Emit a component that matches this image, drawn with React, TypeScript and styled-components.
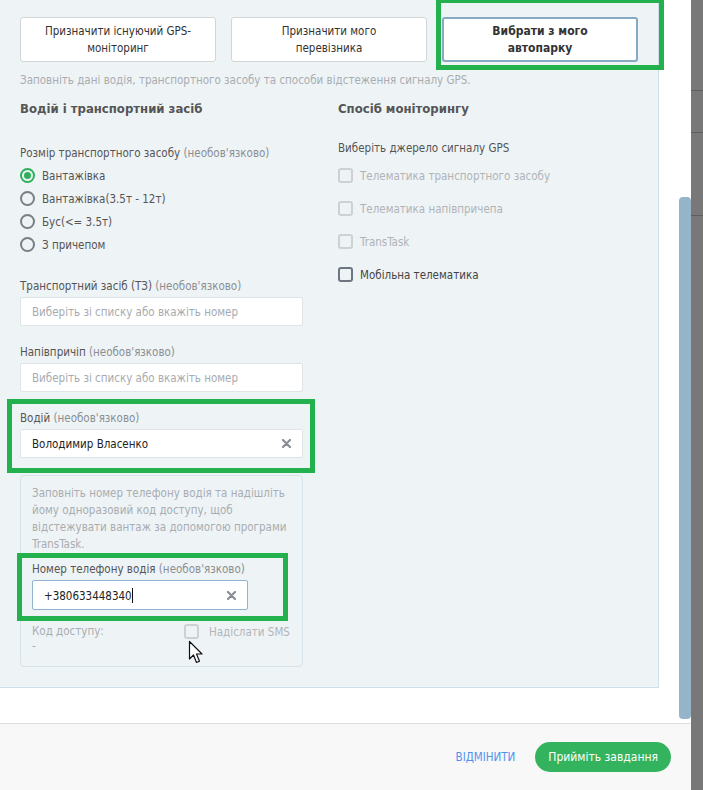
import React from "react"
import styled, { createGlobalStyle, css } from "styled-components"

const GlobalStyle = createGlobalStyle`
  html, body {
    margin: 0;
    padding: 0;
    background: #ffffff;
  }
  body {
    font-family: "DejaVu Sans Condensed", "Liberation Sans Narrow", Roboto, sans-serif;
    font-size: 11.5px;
    color: #555;
  }
`

const Screen = styled.div`
  display: flex;
  width: 703px;
  height: 790px;
  overflow: hidden;
`

const Modal = styled.div`
  display: flex;
  flex-direction: column;
  width: 691px;
  height: 790px;
  background: #fff;
`

const Backdrop = styled.div`
  flex: 1;
  background: #787878;
  display: flex;
  flex-direction: column;
`

const BackdropLine = styled.div<{ $top: number }>`
  margin-top: ${(p) => p.$top}px;
  height: 1px;
  background: #5e5e5e;
`

const Body = styled.div`
  display: flex;
  height: 723px;
`

const Panel = styled.div`
  position: relative;
  box-sizing: border-box;
  width: 659px;
  height: 688px;
  padding: 17px 0 0 20px;
  background: #eef3f6;
  border-right: 1px solid #cfdfe8;
  border-bottom: 1px solid #cfdfe8;
`

const Scrollbar = styled.div`
  width: 12px;
  height: 522px;
  margin: 197px 0 0 20px;
  border-radius: 4px;
  background: #95b4ca;
`

const TabRow = styled.div`
  display: flex;
  gap: 15px;
`

const Tab = styled.button<{ $active?: boolean }>`
  box-sizing: border-box;
  width: 196px;
  height: 45px;
  padding: 0 16px;
  background: #fff;
  border: 1px solid #d3d6d9;
  border-radius: 3px;
  font-family: inherit;
  font-size: 11.5px;
  line-height: 17px;
  color: #333;
  ${(p) =>
    p.$active &&
    css`
      border: 2px solid #86a9c4;
      font-weight: bold;
      font-size: 12px;
    `}
`

const Highlight = styled.div<{ $l: number; $t: number; $w: number; $h: number }>`
  position: absolute;
  left: ${(p) => p.$l}px;
  top: ${(p) => p.$t}px;
  width: ${(p) => p.$w}px;
  height: ${(p) => p.$h}px;
  box-sizing: border-box;
  border: 5px solid #22b14c;
  pointer-events: none;
`

const Hint = styled.div`
  margin-top: 10px;
  line-height: 16px;
  color: #a9adb1;
`

const Columns = styled.div`
  display: grid;
  grid-template-columns: 283px 283px;
  column-gap: 35px;
  margin-top: 13px;
`

const Column = styled.div`
  display: flex;
  flex-direction: column;
`

const SectionTitle = styled.div`
  font-size: 13px;
  font-weight: bold;
  line-height: 16px;
  color: #555;
`

const Label = styled.div<{ $mt?: number; $ellipsis?: boolean }>`
  margin-top: ${(p) => p.$mt ?? 18}px;
  margin-bottom: 3px;
  line-height: 16px;
  color: #555;
  ${(p) =>
    p.$ellipsis &&
    css`
      white-space: nowrap;
      overflow: hidden;
      text-overflow: ellipsis;
    `}
`

const Optional = styled.span`
  color: #8b8f93;
`

const RadioList = styled.div`
  display: flex;
  flex-direction: column;
`

const RadioRow = styled.div`
  display: flex;
  align-items: center;
  gap: 7px;
  height: 23px;
  color: #555;
`

const RadioDot = styled.span<{ $checked?: boolean }>`
  box-sizing: border-box;
  width: 15px;
  height: 15px;
  border-radius: 50%;
  border: 2px solid ${(p) => (p.$checked ? "#2eb05b" : "#7a7f84")};
  display: flex;
  align-items: center;
  justify-content: center;
  &::after {
    content: "";
    width: 7px;
    height: 7px;
    border-radius: 50%;
    background: ${(p) => (p.$checked ? "#2eb05b" : "transparent")};
  }
`

const InputBox = styled.div<{ $focused?: boolean; $width?: number; $height?: number }>`
  box-sizing: border-box;
  display: flex;
  align-items: center;
  width: ${(p) => p.$width ?? 283}px;
  height: ${(p) => p.$height ?? 29}px;
  padding: 0 11px;
  background: #fff;
  border: 1px solid ${(p) => (p.$focused ? "#8fb2d2" : "#dfe4e8")};
  border-radius: 2px;
`

const InputText = styled.span<{ $placeholder?: boolean }>`
  flex: 1;
  color: ${(p) => (p.$placeholder ? "#a7abaf" : "#222")};
`

const Caret = styled.span`
  display: inline-block;
  width: 1px;
  height: 15px;
  background: #111;
  vertical-align: -3px;
`

const DriverGroup = styled.div`
  position: relative;
  display: flex;
  flex-direction: column;
`

const PhoneCard = styled.div`
  position: relative;
  box-sizing: border-box;
  width: 283px;
  height: 192px;
  margin-top: 17px;
  padding: 9px 11px 0;
  border: 1px solid #d6e3ea;
  border-radius: 4px;
`

const CardText = styled.div`
  line-height: 17px;
  color: #a9adb1;
`

const PhoneField = styled.div`
  width: 216px;
`

const AccessRow = styled.div`
  display: flex;
  margin-top: 14px;
  white-space: nowrap;
`

const AccessInfo = styled.div`
  width: 152px;
  line-height: 15px;
  color: #a9adb1;
`

const SmsRow = styled.div`
  display: flex;
  align-items: center;
  gap: 10px;
  height: 15px;
  color: #b3b6b9;
`

const Check = styled.span<{ $enabled?: boolean }>`
  box-sizing: border-box;
  flex: none;
  width: 15px;
  height: 15px;
  border-radius: 3px;
  border: 2px solid ${(p) => (p.$enabled ? "#6c7580" : "#cdd1d5")};
`

const CheckList = styled.div`
  display: flex;
  flex-direction: column;
`

const CheckRow = styled.div<{ $enabled?: boolean }>`
  display: flex;
  align-items: center;
  gap: 7px;
  height: 33px;
  color: ${(p) => (p.$enabled ? "#444" : "#b0b4b8")};
`

const Cursor = styled.svg`
  position: absolute;
  left: 167px;
  top: 164px;
`

const Footer = styled.div`
  flex: 1;
  display: flex;
  align-items: center;
  justify-content: flex-end;
  gap: 20px;
  padding-right: 20px;
  background: #f8f8f8;
  border-top: 1px solid #dedede;
`

const CancelButton = styled.button`
  border: none;
  background: none;
  padding: 0;
  font-family: inherit;
  font-size: 11.5px;
  color: #4f93f0;
  text-transform: uppercase;
`

const AcceptButton = styled.button`
  height: 30px;
  padding: 0 13px;
  border: none;
  border-radius: 15px;
  background: #33b35e;
  color: #fff;
  font-family: inherit;
  font-size: 12px;
`

const ClearIcon = () => (
  <svg width="9" height="9" viewBox="0 0 9 9">
    <path d="M1 1 L8 8 M8 1 L1 8" stroke="#8a8e92" strokeWidth="2.2" strokeLinecap="round" />
  </svg>
)

const Field: React.FC<{ label: string; value?: string; placeholder?: string; mt?: number }> = ({
  label,
  value,
  placeholder,
  mt,
}) => (
  <>
    <Label $mt={mt}>
      {label} <Optional>(необов'язково)</Optional>
    </Label>
    <InputBox>
      <InputText $placeholder={!value}>{value ?? placeholder}</InputText>
      {value && <ClearIcon />}
    </InputBox>
  </>
)

const sizes = ["Вантажівка", "Вантажівка(3.5т - 12т)", "Бус(<= 3.5т)", "З причепом"]

const sources = [
  { name: "Телематика транспортного засобу", enabled: false },
  { name: "Телематика напівпричепа", enabled: false },
  { name: "TransTask", enabled: false },
  { name: "Мобільна телематика", enabled: true },
]

export default function App() {
  return (
    <Screen>
      <GlobalStyle />
      <Modal>
        <Body>
          <Panel>
            <TabRow>
              <Tab>Призначити існуючий GPS-моніторинг</Tab>
              <Tab>Призначити мого перевізника</Tab>
              <Tab $active>Вибрати з мого автопарку</Tab>
            </TabRow>
            <Highlight $l={436} $t={-2} $w={228} $h={72} />
            <Hint>Заповніть дані водія, транспортного засобу та способи відстеження сигналу GPS.</Hint>
            <Columns>
              <Column>
                <SectionTitle>Водій і транспортний засіб</SectionTitle>
                <Label $mt={28}>
                  Розмір транспортного засобу <Optional>(необов'язково)</Optional>
                </Label>
                <RadioList>
                  {sizes.map((s, i) => (
                    <RadioRow key={s}>
                      <RadioDot $checked={i === 0} />
                      {s}
                    </RadioRow>
                  ))}
                </RadioList>
                <Field label="Транспортний засіб (ТЗ)" placeholder="Виберіть зі списку або вкажіть номер" mt={22} />
                <Field label="Напівпричіп" placeholder="Виберіть зі списку або вкажіть номер" />
                <DriverGroup>
                  <Field label="Водій" value="Володимир Власенко" />
                  <Highlight $l={-13} $t={7} $w={308} $h={74} />
                </DriverGroup>
                <PhoneCard>
                  <CardText>
                    Заповніть номер телефону водія та надішліть йому одноразовий код доступу, щоб
                    відстежувати вантаж за допомогою програми TransTask.
                  </CardText>
                  <PhoneField>
                    <Label $mt={8} $ellipsis>
                      Номер телефону водія <Optional>(необов'язково)</Optional>
                    </Label>
                    <InputBox $focused $width={216} $height={30}>
                      <InputText>
                        +380633448340
                        <Caret />
                      </InputText>
                      <ClearIcon />
                    </InputBox>
                  </PhoneField>
                  <AccessRow>
                    <AccessInfo>
                      Код доступу:
                      <br />-
                    </AccessInfo>
                    <SmsRow>
                      <Check />
                      Надіслати SMS
                    </SmsRow>
                  </AccessRow>
                  <Highlight $l={-4} $t={77} $w={271} $h={68} />
                  <Cursor width="18" height="26" viewBox="0 0 18 26">
                    <path
                      d="M1.5 1.5 L1.5 19 L5.5 15 L8.5 22.5 L11.5 21.2 L8.5 14 L14 14 Z"
                      fill="#fff"
                      stroke="#111"
                      strokeWidth="1.2"
                      strokeLinejoin="round"
                    />
                  </Cursor>
                </PhoneCard>
              </Column>
              <Column>
                <SectionTitle>Спосіб моніторингу</SectionTitle>
                <Label $mt={23}>Виберіть джерело сигналу GPS</Label>
                <CheckList>
                  {sources.map((s) => (
                    <CheckRow key={s.name} $enabled={s.enabled}>
                      <Check $enabled={s.enabled} />
                      {s.name}
                    </CheckRow>
                  ))}
                </CheckList>
              </Column>
            </Columns>
          </Panel>
          <Scrollbar />
        </Body>
        <Footer>
          <CancelButton>Відмінити</CancelButton>
          <AcceptButton>Прийміть завдання</AcceptButton>
        </Footer>
      </Modal>
      <Backdrop>
        <BackdropLine $top={90} />
        <BackdropLine $top={41} />
        <BackdropLine $top={82} />
      </Backdrop>
    </Screen>
  )
}
